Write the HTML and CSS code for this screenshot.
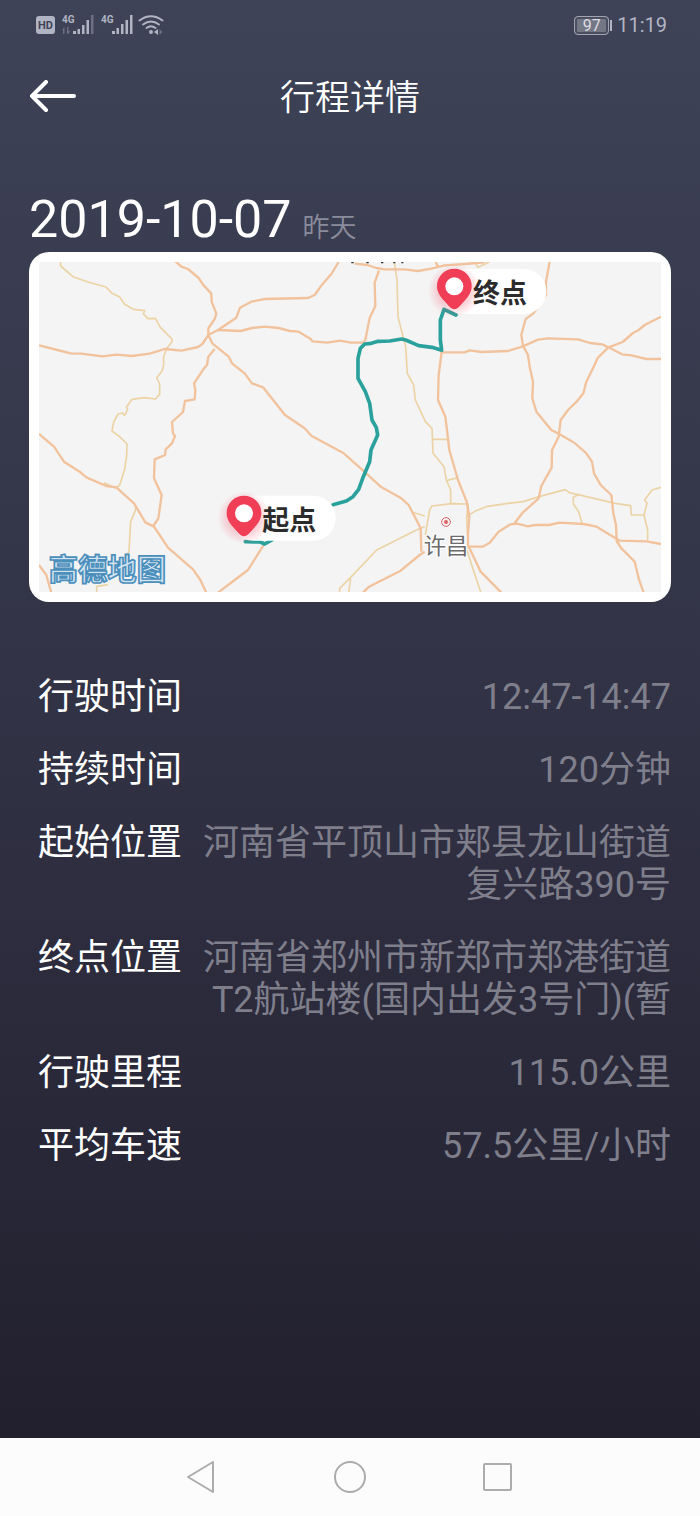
FILE: index.html
```html
<!DOCTYPE html>
<html lang="zh-CN">
<head>
  <meta charset="utf-8">
  <meta name="viewport" content="width=device-width, initial-scale=1">
  <title>行程详情</title>
  <link rel="stylesheet" href="styles.css">
</head>
<body>
<div class="status-bar">
  <svg class="status-icons" width="130" height="26" viewBox="0 0 130 26" aria-hidden="true">
    <rect x="0" y="4" width="19" height="18" rx="3"/>
    <text class="hd" x="2" y="17">HD</text>
    <text class="net" x="26" y="11">4G</text>
    <path class="dim" d="M26 18l2.500-3v7h-1.500v-4zM31 15h1.500v4h2l-2.500 3h-1z"/>
    <path d="M37 19h3v3h-3zM41.500 17h2.500v5h-2.500zM46 13h2.500v9h-2.500zM50.500 8h2.500v14h-2.500z"/>
    <path class="dim" d="M55 3h2.500v19h-2.500z"/>
    <text class="net" x="65" y="11">4G</text>
    <path d="M76 19h3v3h-3zM80.500 16h2.500v6h-2.500zM85 12h2.500v10h-2.500zM89.500 8h2.500v14h-2.500zM94 3h2.500v19h-2.500z"/>
    <g class="wifi">
      <path d="M103.500 8.500q11.500-8.500 23 0"/>
      <path d="M107 12.500q8-6 16 0"/>
      <path d="M110.500 16q4.500-3.500 9 0"/>
    </g>
    <circle cx="115" cy="20" r="2"/>
    <path d="M118 20l4-3v6z"/>
    <path class="dim" d="M123.500 17l3 3-3 3z"/>
  </svg>
  <div class="status-right">
    <span class="battery">97</span>
    <time>11:19</time>
  </div>
</div>

<header class="header">
  <button class="back" type="button" aria-label="返回">
    <svg width="48" height="34" viewBox="0 0 48 34">
      <path d="M45 16H3M17 2L3 16l14 14"/>
    </svg>
  </button>
  <h1>行程详情</h1>
</header>

<main class="trip">
  <div class="trip-date">
    <h2>2019-10-07</h2>
    <span>昨天</span>
  </div>

  <div class="map">
    <svg viewBox="33 36 1866 990" role="img" aria-label="行程路线">
      <defs>
        <radialGradient id="glow">
          <stop offset="0.400" stop-color="#f5405a" stop-opacity="0.350"/>
          <stop offset="1" stop-color="#f5405a" stop-opacity="0"/>
        </radialGradient>
        <g id="pin">
          <circle cx="0" cy="-56" r="80" fill="url(#glow)"/>
          <path d="M0 0C-10 0-20-14-30-25C-43-40-52-52-52-70A52 52 0 0 1 52-70C52-52 43-40 30-25C20-14 10 0 0 0z" fill="#f03e56"/>
          <circle cx="0" cy="-69" r="27" fill="#fff"/>
        </g>
      </defs>

      <!-- minor roads -->
      <g class="road minor">
        <path d="M98 30V48L135 80L180 96L234 111L252 130L275 141L290 163L316 178L350 182L346 192L360 206L382 205L397 232L432 267V275L415 297L407 320V345L402 363L386 384L395 402V433L382 447L350 443L312 448L295 472L299 478L290 496L283 489L270 492L257 516L252 543L275 560L297 582L296 617L290 658L275 706L262 714L228 698"/>
        <path d="M323 768L322 782L308 815L303 905L290 925M240 1004L206 1009V1030"/>
        <path d="M1098 30L1107 90L1110 200L1124 255L1133 290L1138 370L1157 405L1162 450L1192 515L1212 535L1215 610L1248 650L1255 690L1268 720V762"/>
        <path d="M1215 568H1257M1255 692L1290 683M1192 855L1205 780L1212 768L1270 761L1320 762V800"/>
        <path d="M1150 786L1190 798M1190 830L1170 838L1046 900L970 980L935 1015V1028M968 985L962 1028"/>
        <path d="M1322 796L1344 782L1378 769L1440 760L1486 755L1533 740L1612 719L1624 728L1698 745L1762 760L1808 767L1810 795H1850"/>
        <path d="M1655 732L1636 742V762L1652 785L1662 820M1899 712L1872 720L1850 750L1857 760L1848 795L1859 840V870"/>
        <path d="M1320 765L1316 805L1321 895M1317 900L1336 960L1358 1026M1344 42L1350 52L1384 36"/>
      </g>

      <!-- highways -->
      <g class="road major">
        <path d="M33 286L65 294L128 310L160 311L223 319L265 314L312 318L365 311L410 297L460 302L510 291L523 282L541 255L570 240L625 203L636 173L670 155L710 147L840 144L860 135L882 104L910 72L932 36"/>
        <path d="M441 33L460 50L480 57L512 84L525 104L550 131L551 155L565 191L560 207L541 235V255L553 280L602 320L613 341L650 370L672 400L705 412L771 495L830 535L850 557L946 609L999 656L1058 710L1120 745L1142 765L1178 835L1180 905"/>
        <path d="M570 240L638 243L672 234L710 230L752 234L786 243L812 245L848 267L853 274L898 278L936 272L968 278H1005L1012 270L1025 204L1042 168L1040 98L1053 62"/>
        <path d="M560 297L541 320L537 345L526 358L498 400L502 420L500 448L471 453L465 486L432 516L435 550L441 558L432 580L413 598L411 615L380 628L378 685L401 735L391 805L376 828"/>
        <path d="M33 552L78 590L108 635L155 665L175 682L235 708L265 712L318 760L352 817L378 830L420 893L495 958L517 990L535 1028"/>
        <path d="M33 945L55 975L70 1028M570 1028L620 990L660 960L710 880"/>
        <path d="M980 41L1018 45L1045 54L1070 58H1130L1170 63L1210 56L1250 46L1310 42L1370 37M1220 30L1230 50"/>
        <path d="M1243 307H1310L1325 301L1360 306L1440 303L1485 289L1530 269L1560 265L1650 268L1686 279L1722 283L1740 291L1782 313L1810 316L1855 327H1899M1899 200L1850 225L1832 240L1815 249L1784 276L1740 293L1709 324L1695 355L1675 395L1666 430L1646 455L1620 480L1598 510L1592 560L1572 600L1571 653L1540 708L1532 745L1485 787L1458 822"/>
        <path d="M1566 30L1554 95V135L1516 190L1493 207L1480 255L1485 287L1500 315L1505 350L1515 395L1513 445L1525 485L1570 540L1590 550L1640 579L1675 610L1692 635L1698 670L1718 705L1750 735L1756 790L1764 825L1766 873L1780 895L1820 935L1832 985L1847 1028"/>
        <path d="M1241 305L1232 375L1230 450L1252 500L1257 540L1264 600L1290 690L1316 755L1324 800L1320 850V885L1358 965L1420 1028"/>
        <path d="M1320 890L1364 890L1385 878L1412 845L1447 823L1466 821L1500 829L1520 825L1563 825L1595 818L1666 822L1706 830L1775 872L1855 874L1899 882"/>
        <path d="M1190 905L1175 915L1118 962L1023 1010L1005 1028"/>
      </g>

      <!-- trip route -->
      <path class="route" d="M1284 195L1248 178L1237 210V270L1241 301L1212 292L1172 287L1133 270L1121 267L1085 273L1050 274L1030 280L1010 282L997 295L990 325V385L1012 425L1025 460L1032 510L1045 533L1049 555L1029 600L1025 635L1004 685L992 718L975 740L955 753L915 764"/>
      <path class="route" d="M652 875L697 876L710 882L732 870"/>

      <g class="cut-label"><path d="M970 37h7M1015 37h7M1059 37h7M1096 37h6M1120 37h6"/></g>

      <!-- city -->
      <circle cx="1254" cy="816" r="13" fill="none" stroke="#dd6068" stroke-width="3"/>
      <circle cx="1254" cy="816" r="6" fill="#dd6068"/>
      <text class="city" x="1187" y="911">许昌</text>

      <rect class="bubble" x="1240" y="57" width="315" height="135" rx="67"/>
      <use href="#pin" x="1279" y="178"/>
      <text class="place" x="1335" y="159">终点</text>

      <rect class="bubble" x="608" y="737" width="315" height="135" rx="67"/>
      <use href="#pin" x="648" y="859"/>
      <text class="place" x="703" y="840">起点</text>

      <text class="brand" x="62" y="991">高德地图</text>
    </svg>
  </div>

  <dl class="details">
    <div class="row"><dt>行驶时间</dt><dd>12:47-14:47</dd></div>
    <div class="row"><dt>持续时间</dt><dd>120分钟</dd></div>
    <div class="row"><dt>起始位置</dt><dd>河南省平顶山市郏县龙山街道复兴路390号</dd></div>
    <div class="row"><dt>终点位置</dt><dd>河南省郑州市新郑市郑港街道T2航站楼(国内出发3号门)(暂</dd></div>
    <div class="row"><dt>行驶里程</dt><dd>115.0公里</dd></div>
    <div class="row"><dt>平均车速</dt><dd>57.5公里/小时</dd></div>
  </dl>
</main>

<nav class="nav-bar">
  <button type="button" aria-label="后退">
    <svg width="34" height="34" viewBox="0 0 34 34"><path d="M28 2v30L3 17z"/></svg>
  </button>
  <button type="button" aria-label="主页">
    <svg width="34" height="34" viewBox="0 0 34 34"><circle cx="17" cy="17" r="15"/></svg>
  </button>
  <button type="button" aria-label="最近任务">
    <svg width="34" height="34" viewBox="0 0 34 34"><rect x="3" y="4" width="27" height="26" rx="1"/></svg>
  </button>
</nav>
</body>
</html>
```

FILE: styles.css
```css
* {
  box-sizing: border-box;
}
body {
  margin: 0;
  min-height: 100vh;
  display: flex;
  flex-direction: column;
  background: linear-gradient(#3e4357, #2e2e40 58%, #22202e 95%);
  color: #fff;
  font-family: Roboto, "Noto Sans CJK SC", sans-serif;
}
h1, h2, dl, dd {
  margin: 0;
  font-weight: 400;
}
button {
  padding: 0;
  border: 0;
  background: none;
  cursor: pointer;
}
svg {
  display: block;
}

/* status bar */
.status-bar {
  display: flex;
  align-items: center;
  justify-content: space-between;
  height: 50px;
  padding: 0 33px 0 36px;
  color: #b1b4c2;
}
.status-icons {
  fill: #b1b4c2;
}
.status-icons .dim {
  opacity: 0.4;
}
.status-icons text {
  font-weight: 700;
}
.status-icons .hd {
  font-size: 11px;
  fill: #3e4357;
}
.status-icons .net {
  font-size: 10px;
}
.wifi {
  fill: none;
  stroke: #b1b4c2;
  stroke-width: 2;
  stroke-linecap: round;
}
.status-right {
  display: flex;
  align-items: center;
  gap: 8px;
  font-size: 20px;
}
.battery {
  position: relative;
  width: 35px;
  height: 19px;
  border: 1px solid #a0a3b0;
  border-radius: 4px;
  background: #747784;
  box-shadow: inset 0 0 0 2px #4a4e60;
  color: #dcdde4;
  font-size: 16px;
  line-height: 17px;
  text-align: center;
}
.battery::after {
  content: "";
  position: absolute;
  top: 3px;
  right: -4px;
  width: 2px;
  height: 11px;
  background: #b1b4c2;
}

/* header */
.header {
  display: grid;
  grid-template-columns: 48px 1fr 48px;
  align-items: center;
  height: 94px;
  padding: 0 29px;
}
.header h1 {
  padding-top: 4px;
  font-size: 35px;
  line-height: 42px;
  text-align: center;
  font-weight: 350;
}
.back path {
  fill: none;
  stroke: #fff;
  stroke-width: 4;
  stroke-linecap: round;
  stroke-linejoin: round;
}

/* trip */
.trip {
  flex: 1;
  padding: 46px 29px;
}
.trip-date {
  display: flex;
  align-items: baseline;
  gap: 11px;
  height: 62px;
}
.trip-date h2 {
  font-size: 52px;
  line-height: 60px;
}
.trip-date span {
  color: #8b8c9b;
  font-size: 27px;
  line-height: 36px;
  font-weight: 350;
}
.map {
  padding: 10px;
  border-radius: 20px;
  background: #fff;
}
.map svg {
  width: 100%;
  background: #f4f4f4;
}
.road {
  fill: none;
  stroke-linejoin: round;
}
.minor {
  stroke: #ecd3a5;
  stroke-width: 5;
}
.major {
  stroke: #f1c29c;
  stroke-width: 7;
}
.route {
  fill: none;
  stroke: #2aa19c;
  stroke-width: 11;
  stroke-linecap: round;
  stroke-linejoin: round;
}
.cut-label {
  stroke: #333;
  stroke-width: 5;
}
.bubble {
  fill: #fff;
}
.place {
  fill: #2c2c2c;
  font-size: 81px;
  font-weight: 700;
}
.city {
  fill: #6b6b6b;
  stroke: #fff;
  stroke-width: 6;
  paint-order: stroke;
  font-size: 67px;
}
.brand {
  fill: #d3e5f0;
  stroke: #4b8fbd;
  stroke-width: 5;
  font-size: 88px;
  font-weight: 700;
}

/* details */
.details {
  display: flex;
  flex-direction: column;
  gap: 31px;
  margin-top: 74px;
  padding-left: 9px;
  font-size: 36px;
  line-height: 42px;
}
.row {
  display: flex;
  gap: 20px;
}
.row dt {
  flex: none;
}
.row dd {
  flex: 1;
  color: #7f7f8c;
  text-align: right;
}

/* system navigation */
.nav-bar {
  display: flex;
  justify-content: center;
  gap: 114px;
  height: 78px;
  background: #fcfcfc;
}
.nav-bar svg {
  fill: none;
  stroke: #acacac;
  stroke-width: 2;
  stroke-linejoin: round;
}
```
